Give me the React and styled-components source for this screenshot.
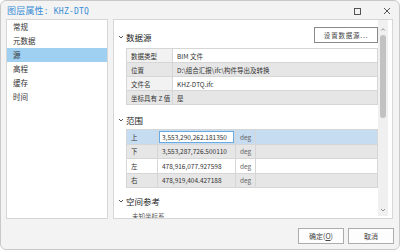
import React from 'react';
import styled, { createGlobalStyle } from 'styled-components';

const GlobalStyle = createGlobalStyle`
  html, body {
    margin: 0;
    padding: 0;
    background: #ffffff;
  }
  body {
    font-family: "Noto Sans CJK SC", "Noto Sans", sans-serif;
    color: #333;
  }
`;

const Window = styled.div`
  width: 400px;
  height: 250px;
  box-sizing: border-box;
  border: 1px solid #c9c9c9;
  border-radius: 6px;
  background: #f3f3f3;
  display: flex;
  flex-direction: column;
  overflow: hidden;
`;

const TitleBar = styled.div`
  height: 18px;
  display: flex;
  align-items: center;
  padding: 0 8px 0 6px;
`;

const Title = styled.div`
  font-size: 9px;
  color: #3a8ed6;
  letter-spacing: 0.2px;
  margin-top: 1px;
`;

const TitleMono = styled.span`
  font-family: "DejaVu Sans Mono", "Liberation Mono", monospace;
  font-size: 8px;
`;

const WinButtons = styled.div`
  margin-left: auto;
  display: flex;
  align-items: center;
  gap: 22px;
  margin-top: 2px;
`;

const Body = styled.div`
  height: 200px;
  display: flex;
  gap: 5px;
  padding: 0 6px 0 5px;
`;

const ListPanel = styled.div`
  width: 102px;
  box-sizing: border-box;
  border: 1px solid #d6d6d6;
  background: #fff;
`;

const ListItem = styled.div`
  height: 14px;
  line-height: 14px;
  padding-left: 6px;
  font-size: 7.5px;
  color: #333;
  background: ${(p) => (p.$active ? '#9fd0f2' : 'transparent')};
`;

const MainPanel = styled.div`
  flex: 1;
  box-sizing: border-box;
  border: 1px solid #d6d6d6;
  background: #fff;
  display: flex;
  overflow: hidden;
`;

const Content = styled.div`
  flex: 1;
  padding: 7px 0 0 4px;
  overflow: hidden;
`;

const SectionHeader = styled.div`
  height: ${(p) => p.$h || 18}px;
  margin-top: ${(p) => p.$mt || 0}px;
  display: flex;
  align-items: center;
  gap: 2px;
  font-size: 8.5px;
  color: #222;
`;

const SetButton = styled.button`
  margin-left: auto;
  align-self: flex-start;
  width: 64px;
  height: 16px;
  box-sizing: border-box;
  border: 1px solid #8a8a8a;
  background: #fff;
  font-family: inherit;
  font-size: 6.5px;
  color: #444;
  letter-spacing: 0.8px;
  padding: 0;
`;

const Table = styled.div`
  margin-left: 8px;
  margin-top: ${(p) => p.$mt || 0}px;
  display: grid;
  grid-template-columns: ${(p) => p.$cols};
  border-top: 1px solid #d6d6d6;
  border-left: 1px solid #d6d6d6;
`;

const Cell = styled.div`
  height: ${(p) => p.$h}px;
  box-sizing: border-box;
  border-right: 1px solid #d6d6d6;
  border-bottom: 1px solid #d6d6d6;
  padding-left: 4px;
  display: flex;
  align-items: center;
  font-size: 6.5px;
  color: ${(p) => (p.$muted ? '#666' : '#333')};
  background: ${(p) => p.$bg};
  white-space: nowrap;
  overflow: hidden;
`;

const InputCell = styled.div`
  height: 14.5px;
  box-sizing: border-box;
  border-bottom: 1px solid #d6d6d6;
  border-right: 1px solid #d6d6d6;
  background: #c6dcf0;
  padding: 1px;
  display: flex;
`;

const Input = styled.div`
  flex: 1;
  box-sizing: border-box;
  border: 1px solid #6aaae0;
  background: #fff;
  font-size: 6.5px;
  color: #333;
  display: flex;
  align-items: center;
  padding-left: 2px;
  white-space: nowrap;
`;

const SubText = styled.div`
  margin-left: 14px;
  margin-top: 1px;
  font-size: 6.5px;
  color: #555;
`;

const ScrollTrack = styled.div`
  width: 10px;
  margin: 0 4px 2px 0;
  background: #f0f0f0;
  display: flex;
  flex-direction: column;
  align-items: center;
`;

const Thumb = styled.div`
  width: 6px;
  height: 83px;
  border-radius: 3px;
  background: #c2c2c2;
  margin-top: 3px;
`;

const ArrowBox = styled.div`
  height: ${(p) => p.$h}px;
  display: flex;
  align-items: ${(p) => p.$align};
  margin-top: ${(p) => (p.$pushDown ? 'auto' : '0')};
`;

const Footer = styled.div`
  flex: 1;
  display: flex;
  justify-content: flex-end;
  gap: 4px;
  padding: 9px 5px 0 0;
`;

const FooterButton = styled.button`
  width: 46px;
  height: 16px;
  box-sizing: border-box;
  border: 1px solid #adadad;
  background: #fdfdfd;
  font-family: inherit;
  font-size: 7px;
  color: #444;
  padding: 0;
`;

const Underline = styled.span`
  text-decoration: underline;
`;

const Chevron = ({ color = '#444' }) => (
  <svg width="6" height="6" viewBox="0 0 6 6">
    <path d="M1 2 L3 4 L5 2" fill="none" stroke={color} strokeWidth="0.9" />
  </svg>
);

const ChevronUp = () => (
  <svg width="6" height="5" viewBox="0 0 6 5">
    <path d="M1.2 3.5 L3 1.7 L4.8 3.5" fill="none" stroke="#777" strokeWidth="0.8" />
  </svg>
);

const MaxIcon = () => (
  <svg width="7" height="7" viewBox="0 0 7 7">
    <rect x="0.5" y="0.5" width="6" height="6" fill="none" stroke="#444" strokeWidth="0.9" />
  </svg>
);

const CloseIcon = () => (
  <svg width="8" height="8" viewBox="0 0 8 8">
    <path d="M1 1 L7 7 M7 1 L1 7" stroke="#444" strokeWidth="0.9" />
  </svg>
);

const navItems = ['常规', '元数据', '源', '高程', '缓存', '时间'];

const sourceRows = [
  ['数据类型', 'BIM 文件'],
  ['位置', 'D:\\组合汇报\\ifc\\构件导出及转换'],
  ['文件名', 'KHZ-DTQ.ifc'],
  ['坐标具有 Z 值', '是'],
];

const extentRows = [
  ['上', '3,553,290,262.181350'],
  ['下', '3,553,287,726.500110'],
  ['左', '478,916,077.927598'],
  ['右', '478,919,404.427188'],
];

const App = () => (
  <>
    <GlobalStyle />
    <Window>
      <TitleBar>
        <Title>
          图层属性<TitleMono>: KHZ-DTQ</TitleMono>
        </Title>
        <WinButtons>
          <MaxIcon />
          <CloseIcon />
        </WinButtons>
      </TitleBar>

      <Body>
        <ListPanel>
          {navItems.map((item) => (
            <ListItem key={item} $active={item === '源'}>
              {item}
            </ListItem>
          ))}
        </ListPanel>

        <MainPanel>
          <Content>
            <SectionHeader $h={20}>
              <Chevron />
              数据源
              <SetButton>设置数据源...</SetButton>
            </SectionHeader>
            <Table $cols="46px 1fr" $mt={1}>
              {sourceRows.map(([k, v], i) => {
                const odd = i % 2 === 1;
                return (
                  <React.Fragment key={k}>
                    <Cell $h={14} $bg={odd ? '#e6e6e6' : '#f2f2f2'}>{k}</Cell>
                    <Cell $h={14} $bg={odd ? '#e6e6e6' : '#ffffff'}>{v}</Cell>
                  </React.Fragment>
                );
              })}
            </Table>

            <SectionHeader $mt={6}>
              <Chevron />
              范围
            </SectionHeader>
            <Table $cols="31px 78px 20px 1fr">
              {extentRows.map(([k, v], i) => {
                const selected = i === 0;
                const bg = selected ? '#c6dcf0' : i % 2 === 1 ? '#e6e6e6' : '#ffffff';
                return (
                  <React.Fragment key={k}>
                    <Cell $h={14.5} $bg={bg}>{k}</Cell>
                    {selected ? (
                      <InputCell>
                        <Input>{v}</Input>
                      </InputCell>
                    ) : (
                      <Cell $h={14.5} $bg={bg}>{v}</Cell>
                    )}
                    <Cell $h={14.5} $bg={bg} $muted>deg</Cell>
                    <Cell $h={14.5} $bg={bg} />
                  </React.Fragment>
                );
              })}
            </Table>

            <SectionHeader $mt={4}>
              <Chevron />
              空间参考
            </SectionHeader>
            <SubText>未知坐标系</SubText>
          </Content>

          <ScrollTrack>
            <ArrowBox $h={12} $align="flex-end">
              <ChevronUp />
            </ArrowBox>
            <Thumb />
            <ArrowBox $h={12} $align="center" $pushDown>
              <Chevron color="#888" />
            </ArrowBox>
          </ScrollTrack>
        </MainPanel>
      </Body>

      <Footer>
        <FooterButton>
          确定(<Underline>O</Underline>)
        </FooterButton>
        <FooterButton>取消</FooterButton>
      </Footer>
    </Window>
  </>
);

export default App;
